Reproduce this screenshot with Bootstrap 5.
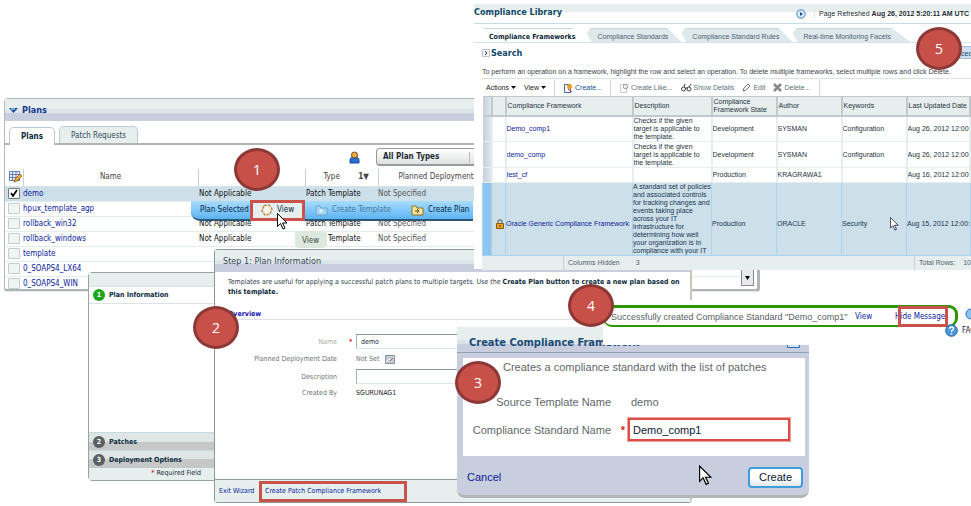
<!DOCTYPE html>
<html lang="en">
<head>
<meta charset="utf-8">
<meta name="viewport" content="width=device-width, initial-scale=1">
<title>Compliance workflow</title>
<link href="https://cdn.jsdelivr.net/npm/bootstrap@5.3.0/dist/css/bootstrap.min.css" rel="stylesheet">
<style>
:root { --navy:#0a1a9c; --pale:#e6efee; --lilac:#c8cede; --callout:#c9524b; }
body { font-family:"DejaVu Sans Condensed","Open Sans",sans-serif; font-size:7px; line-height:8px; color:#1c2b33; background:#fff; overflow:hidden; }
a { color:var(--navy); text-decoration:none; }
button, input, select { font:inherit; color:inherit; border:0; padding:0; background:none; }
.stage { min-height:100vh; overflow:hidden; }
.win { position:absolute; background:#fff; }
.t8 { font-size:8px; line-height:10px; }
.t9 { font-size:9px; line-height:12px; }
.t11 { font:11px/14px "Liberation Sans",sans-serif; }
.bar { height:22px; background:linear-gradient(var(--pale) 0 45%, #dbe5ea 45% 65%, var(--lilac) 65%); }
svg { display:block; flex:none; }

/* numbered step markers */
.step { position:absolute; width:46px; height:43px; border:3px solid #8c3836; border-radius:50%; background:#c75049; color:#fff; font:14px/37px "Open Sans",sans-serif; text-align:center; }
.s1 { left:234px; top:148px; } .s2 { left:193px; top:306px; } .s3 { left:455px; top:361px; } .s4 { left:568px; top:284px; } .s5 { left:916px; top:27px; }

/* plans window */
.plans { left:4px; top:98px; width:756px; height:194px; border:1px solid #b4b8ba; border-bottom:3px solid #aeb4b8; border-right:3px solid #aeb4b8; border-radius:4px; }
.plans-tabs { height:24px; border-bottom:2px solid #b4b4b0; padding-left:4px; }
.ptab { height:17px; padding:4px 11px 0; border:1px solid #bccad2; border-bottom:0; border-radius:5px 5px 0 0; background:var(--pale); color:#344b58; }
.ptab.on { height:18px; background:#fff; margin-bottom:-2px; color:#0b2a3c; font-weight:bold; }
.filter { height:18px; width:110px; border:1px solid #999; border-bottom:2px solid #999; border-radius:4px; background:linear-gradient(#fff,#dde2e2); font-weight:bold; padding-left:6px; appearance:none; }
.filter-row { height:24px; padding-left:344px; }
.grid { table-layout:fixed; width:100%; border-collapse:collapse; }
.plans-grid th { height:17px; font-weight:normal; text-align:center; border-right:1px solid #c5d0d8; color:#444; padding:0; border-bottom:1px solid #d6e2e8; }
.plans-grid td { height:15px; padding:0 1px; border-bottom:1px solid #e4eced; color:#111; white-space:nowrap; }
.plans-grid td:first-child { padding:0 0 0 3px; }
.plans-grid .sel td { background:#cddfe8; }
.plans-grid td.dim { color:#555; padding-left:0; }
.plans-grid td:nth-child(2) { padding:0; }
.tick { appearance:none; display:block; width:12px; height:11px; border:1px solid #c3cdcd; background:#f0f4f3; border-radius:1px; }
.tick:checked { background:#fff url("data:image/svg+xml,%3Csvg xmlns='http://www.w3.org/2000/svg' viewBox='0 0 10 9'%3E%3Cpath d='M2 4l2 3 4-6' fill='none' stroke='%23000' stroke-width='1.7'/%3E%3C/svg%3E"); border-color:#777; }
.pop { position:absolute; left:191px; top:201px; width:282px; height:20px; background:linear-gradient(#a9dcfa,#86cbfa 45%,#5cb3f4); border-bottom:2px solid #2b5a78; border-radius:0 0 0 9px; color:#04233c; padding-left:9px; white-space:nowrap; }
.pop .hot { width:55px; height:21px; border:3px solid var(--callout); background:var(--pale); }
.pop .picked { width:50px; }
.tip { position:absolute; left:295px; top:231px; width:32px; height:17px; background:#dde9df; border-radius:4px; color:#3c4a40; padding:5px 7px; }
.cursor { position:absolute; }
.scroller { position:absolute; right:3px; bottom:3px; width:13px; height:17px; border:1px solid #889; background:#e6eaea; }

/* wizard */
.wiz-nav { left:88px; top:272px; width:127px; height:209px; border:1px solid #98a49e; border-radius:4px 0 0 4px; }
.wiz-nav .item { height:18px; padding-left:4px; font-weight:bold; color:#0b2a3c; }
.wiz-nav .grey { background:linear-gradient(#dfe7e6 0 50%,#c6c8c8 50%); border-top:1px solid #c6dae2; }
.badge-no { width:12px; height:12px; border-radius:50%; background:#5b5f62; color:#fff; text-align:center; line-height:12px; flex:none; }
.badge-no.go { background:#1fa51f; }
.wiz { left:214px; top:249px; width:478px; height:254px; border:1px solid #8f9a96; border-right:2px solid #c6c6ba; border-radius:4px; }
.wiz-intro { padding:5px 4px 0 13px; line-height:10px; color:#2c3d48; }
.wiz-intro b { color:#0b2a3c; }
.wiz-form label, .wiz-form .lab { width:122px; text-align:right; color:#6b7475; }
.wiz-form .field { flex:1; height:15px; border:1px solid #dde8e8; border-top:1px solid #8898a0; border-left-color:#a8b4ba; background:#fff; }
.wiz-foot { height:23px; border-top:1px solid #8f9a96; background:var(--pale); padding-left:4px; }
.wiz-foot a:first-child { width:38px; }
.hot-link { width:148px; height:21px; border:3px solid var(--callout); padding-left:3px; margin-left:2px; }

/* compliance library */
.lib { left:474px; top:0; right:0; height:269px; font-family:"Liberation Sans",sans-serif; }
.lib-top { height:20px; margin-top:4px; border-bottom:1px solid #c4dbe8; background:linear-gradient(var(--pale) 8px,#fff 8px); }
.lib-title { color:#104868; font-weight:bold; line-height:12px; font-family:"DejaVu Sans Condensed",sans-serif; }
.lib-name { font-size:9px; margin-top:-4px; }
.lib-tabs { height:15px; margin-top:4px; border-bottom:1px solid #d5e4e8; padding-left:6px; }
.ltab { height:14px; padding:4px 13px 0 11px; background:#dfe8ea; border-top:1px solid #c2d6e4; clip-path:polygon(4px 0,calc(100% - 14px) 0,100% 100%,5px 100%,0 5px); color:#4b5f74; }
.ltab:last-child { padding-right:20px; clip-path:polygon(4px 0,calc(100% - 20px) 0,100% 100%,5px 100%,0 5px); }
.ltab.on { background:#fff; font-weight:bold; color:#0b1f38; padding:4px 11px 0 9px; font-family:"DejaVu Sans Condensed",sans-serif; }
.lib-help { color:#39444a; padding:9px 0 2px; margin-bottom:0; white-space:nowrap; }
.tools { height:17px; margin-left:8px; color:#222; }
.tools button { white-space:nowrap; display:flex; align-items:center; gap:2px; }
.tools .off { color:#5d707c; }
.tools .sep { width:1px; height:14px; background:#c2d6e4; }
.lib-grid { margin-left:8px; width:calc(100% - 8px); color:#26323c; }
.lib-grid th { height:19px; font-weight:normal; background:var(--pale); border:1px solid #c2c9cc; border-width:1px 2px 2px 0; padding:0 0 0 1px; }
.lib-grid td { border:1px solid var(--pale); border-width:1px 2px 1px 0; padding:0; white-space:nowrap; overflow:hidden; vertical-align:middle; }
.lib-grid td.wrap { white-space:normal; }
.lib-grid .tall { height:26px; }
.lib-grid td:first-child, .lib-grid th:first-child { background:linear-gradient(90deg,#c8cede,#dfe5ec); }
.lib-grid .pick td { background:#cddfe8; border:1px solid #a9d3f2; color:#173654; padding-top:10px; }
.lib-grid .pick td.wrap { padding-top:0; }
.lib-grid .pick td:first-child { background:#8fc4f0; }
.lib-foot { margin-left:8px; height:14px; background:var(--pale); color:#55606a; }
.lib-foot > div { border-left:1px solid #c8cede; height:14px; padding-left:4px; }
.more { position:absolute; right:0; top:46px; width:24px; height:13px; overflow:hidden; background:#cfdff0; border:1px solid #a5bcd6; border-right:0; color:#104868; padding:2px 0 0 13px; }

/* message strip */
.msg { left:603px; top:300px; right:0; height:45px; }
.msg-box { width:355px; height:22px; margin-top:5px; border:3px solid #2e9600; border-width:3px 3px 2px 1px; border-radius:4px 9px 9px 9px; padding-left:7px; color:#596163; font-family:"Liberation Sans",sans-serif; }
.msg-box a { font-family:"DejaVu Sans Condensed",sans-serif; }
.hide-hot { position:absolute; left:295px; top:6px; width:50px; height:21px; border:3px solid var(--callout); }
.faq { position:absolute; left:342px; top:24px; }
.faq-top { position:absolute; right:-6px; top:8px; }

/* dialog */
.dlg { left:457px; top:327px; width:352px; height:171px; background:linear-gradient(var(--pale) 13px,#dbe5ea 13px 17px,var(--lilac) 17px); border-bottom:3px solid #b3b6b6; border-radius:0 0 8px 8px; }
.dlg-head { height:31px; padding:9px 0 0 12px; color:#1b4c75; font-size:11px; font-weight:bold; line-height:13px; background:linear-gradient(#8fa0b8,#8fa0b8) 0 25px/100% 1px no-repeat; }
.dlg-body { height:98px; margin:0 4px 0 6px; background:#fff; color:#5f6769; }
.dlg-body label, .dlg-body .lab { width:148px; text-align:right; }
.dlg-input { flex:1; min-width:0; height:25px; border:3px solid #dc4b45; margin-right:14px; padding-left:3px; color:#0b2030; outline:1px solid #f0a09a; outline-offset:-1px; }
.create { width:55px; height:21px; border:2px solid #3f9ddd; border-radius:4px; background:linear-gradient(#fff 50%,#dfe8ea); color:#0b2030; line-height:15px; }
</style>
<script src="https://cdn.jsdelivr.net/npm/bootstrap@5.3.0/dist/js/bootstrap.bundle.min.js"></script>
</head>
<body>
<main class="stage position-relative">

<section class="win plans">
  <div class="bar d-flex align-items-center gap-1 ps-1 t9 fw-bold" style="color:#14348c">
    <svg width="9" height="7" viewBox="0 0 9 7"><path d="M0 1h9L4.500 6z" fill="#1c4f94"/><path d="M2 2h4z" stroke="#8ec6ee"/></svg>Plans
  </div>
  <nav class="plans-tabs d-flex align-items-end gap-1 t8">
    <a href="#" class="ptab on">Plans</a><a href="#" class="ptab">Patch Requests</a>
  </nav>
  <div class="filter-row d-flex align-items-center gap-3">
    <svg width="11" height="13" viewBox="0 0 11 13"><path d="M1 12V9q0-3 4.500-3T10 9v3z" fill="#2b6fd0" stroke="#164a9c"/><circle cx="5.500" cy="4" r="3" fill="#f0ad4e" stroke="#7a4a12"/></svg>
    <label class="visually-hidden" for="ptype">Plan type</label>
    <div class="position-relative"><select id="ptype" class="filter t8"><option>All Plan Types</option></select>
    <svg class="position-absolute top-0 end-0" width="27" height="19" viewBox="0 0 27 19"><path d="M10.500 4v11" stroke="#bbb"/><path d="M15 7h6l-3 5z" fill="#111"/></svg></div>
  </div>
  <table class="grid plans-grid t8">
    <colgroup><col style="width:18px"><col style="width:175px"><col style="width:107px"><col style="width:73px"><col></colgroup>
    <thead><tr>
      <th><svg class="ms-1" width="13" height="14" viewBox="0 0 13 14"><path d="M.5 1.500h10v9H.5zM.5 4.500h10M.5 7.500h10M3.500 1.500v9M7 1.500v9" fill="#eef3fb" stroke="#5c7fb4"/><path d="M5 12l1-3 5-5 2 2-5 5z" fill="#f0a830" stroke="#7a4a12" stroke-width=".7"/></svg></th>
      <th>Name</th><th></th><th>&nbsp; &nbsp; Type &nbsp; &nbsp; &nbsp; &nbsp;<b>1</b>&#9660;</th><th class="text-start text-nowrap" style="padding-left:20px">Planned Deployment</th></tr></thead>
    <tbody>
      <tr class="sel"><td><input class="tick" type="checkbox" aria-label="demo" checked></td><td><a href="#">demo</a></td><td>Not Applicable</td><td>Patch Template</td><td class="dim">Not Specified</td></tr>
      <tr><td><input class="tick" type="checkbox" aria-label="hpux_template_agp"></td><td><a href="#">hpux_template_agp</a></td><td></td><td></td><td></td></tr>
      <tr><td><input class="tick" type="checkbox" aria-label="rollback_win32"></td><td><a href="#">rollback_win32</a></td><td>Not Applicable</td><td>Patch Template</td><td class="dim">Not Specified</td></tr>
      <tr><td><input class="tick" type="checkbox" aria-label="rollback_windows"></td><td><a href="#">rollback_windows</a></td><td>Not Applicable</td><td>Patch Template</td><td class="dim">Not Specified</td></tr>
      <tr><td><input class="tick" type="checkbox" aria-label="template"></td><td><a href="#">template</a></td><td></td><td></td><td></td></tr>
      <tr><td><input class="tick" type="checkbox" aria-label="0_SOAPS4_LX64"></td><td><a href="#">0_SOAPS4_LX64</a></td><td></td><td></td><td></td></tr>
      <tr><td><input class="tick" type="checkbox" aria-label="0_SOAPS4_WIN"></td><td><a href="#">0_SOAPS4_WIN</a></td><td></td><td></td><td></td></tr>
    </tbody>
  </table>
  <button class="scroller d-flex align-items-center justify-content-center" aria-label="Scroll down"><svg width="5" height="4" viewBox="0 0 5 4"><path d="M0 0h5L2.500 4z"/></svg></button>
</section>

<div class="pop d-flex align-items-center t8">
  <span class="picked">Plan Selected</span>
  <button class="hot d-flex align-items-center justify-content-center gap-1"><svg width="12" height="12" viewBox="0 0 12 12"><path d="M3 1.500l5-.5 3 4-2 5-5 1-3-4z" fill="#f8f4ea" stroke="#b9924e" stroke-width="1.500" stroke-dasharray="3 1"/></svg>View</button>
  <button class="d-flex align-items-center gap-1" style="color:#4c7897;margin-left:10px"><svg width="13" height="12" viewBox="0 0 13 12"><path d="M1 2h4l1 2h6v7H1z" fill="#a5d5f3" stroke="#6da6cf"/><path d="M4 7h4M6 5v4" stroke="#e8f5fc"/></svg>Create Template</button>
  <button class="d-flex align-items-center gap-1" style="margin-left:20px"><svg width="13" height="12" viewBox="0 0 13 12"><path d="M1 2h4l1 2h6v7H1z" fill="#f4e39a" stroke="#8d7420"/><path d="M4 7h4l-2-2M8 7L6 9" stroke="#5a4a10" fill="none"/></svg>Create Plan</button>
</div>
<div class="tip t8">View</div>

<aside class="win wiz-nav d-flex flex-column">
  <div style="height:13px;background:#e6efee"></div>
  <div class="item d-flex align-items-center gap-1 border-top border-bottom"><span class="badge-no go">1</span>Plan Information</div>
  <div class="flex-grow-1"></div>
  <div class="item grey d-flex align-items-center gap-1"><span class="badge-no">2</span>Patches</div>
  <div class="item grey d-flex align-items-center gap-1"><span class="badge-no">3</span>Deployment Options</div>
  <div class="text-end" style="background:#e6efee;height:12px;line-height:11px;padding-right:13px"><b style="color:#d33">*</b> Required Field</div>
</aside>

<section class="win wiz d-flex flex-column">
  <div class="bar d-flex align-items-center t9 ps-2" style="color:#3a4954">Step 1: Plan Information</div>
  <p class="mb-0 wiz-intro">Templates are useful for applying a successful patch plans to multiple targets. Use the <b>Create Plan button to create a new plan based on<br>this template.</b></p>
  <h2 class="fw-bold border-bottom" style="font-size:7px;line-height:9px;color:#1414b4;margin:13px 0 14px 13px">Overview</h2>
  <form class="wiz-form d-flex flex-column flex-grow-1">
    <div class="d-flex align-items-center"><label for="pn" style="color:#a3abab">Name</label><b style="color:#d22;width:18px;padding-left:12px">*</b><input id="pn" class="field ps-1" value="demo" style="margin-left:1px"></div>
    <div class="d-flex align-items-center gap-3" style="height:20px"><span class="lab">Planned Deployment Date</span><span style="color:#6b7475;padding-left:3px;width:28px">Not Set</span><svg style="margin-left:-12px" width="10" height="9" viewBox="0 0 10 9"><path d="M.5.500h9v8h-9z" fill="#c4cad4" stroke="#8792a2"/><path d="M1 7l3-3 2 1 3-3" fill="none" stroke="#fff"/><path d="M5 6l3-3" stroke="#b55"/></svg></div>
    <div class="d-flex align-items-center gap-3"><label for="pd">Description</label><input id="pd" class="field" style="margin-left:3px"></div>
    <div class="d-flex align-items-center gap-3" style="height:18px"><span class="lab">Created By</span><span style="color:#222;padding-left:3px">SGURUNAG1</span></div>
  </form>
  <div class="wiz-foot d-flex align-items-center"><a href="#">Exit Wizard</a><a href="#" class="hot-link d-flex align-items-center">Create Patch Compliance Framework</a></div>
</section>

<section class="win lib">
  <header class="lib-top d-flex align-items-center">
    <h1 class="lib-title lib-name mb-0 flex-grow-1">Compliance Library</h1>
    <svg width="10" height="10" viewBox="0 0 10 10"><circle cx="5" cy="5" r="4.200" fill="#dcedfb" stroke="#3b82c4"/><path d="M4 3l3 2-3 2z" fill="#1d4f8c"/></svg>
    <span class="border-start ms-2 ps-1" style="padding-right:2px">Page Refreshed <b>Aug 26, 2012 5:20:11 AM UTC</b></span>
  </header>
  <nav class="lib-tabs d-flex">
    <a class="ltab on" href="#">Compliance Frameworks</a><a class="ltab" href="#">Compliance Standards</a><a class="ltab" href="#">Compliance Standard Rules</a><a class="ltab" href="#">Real-time Monitoring Facets</a>
  </nav>
  <h2 class="lib-title t9 d-flex align-items-center mb-0 ms-2 pt-1"><svg width="8" height="8" viewBox="0 0 8 8"><path d="M.5.500h7v7h-7z" fill="#f4f6f8" stroke="#b9c4cc"/><path d="M3 2l2 2-2 2" fill="none" stroke="#333"/></svg><span style="padding-left:1px">Search</span></h2>
  <p class="lib-help ms-2 border-bottom">To perform an operation on a framework, highlight the row and select an operation. To delete multiple frameworks, select multiple rows and click Delete.</p>
  <div class="tools d-flex align-items-center gap-2 ps-1">
    <button>Actions <svg width="5" height="3" viewBox="0 0 5 3"><path d="M0 0h5L2.500 3z"/></svg></button>
    <button>View <svg width="5" height="3" viewBox="0 0 5 3"><path d="M0 0h5L2.500 3z"/></svg></button>
    <span class="sep"></span>
    <button style="color:#16508c"><svg width="10" height="10" viewBox="0 0 10 10"><path d="M1.500 1.500h6v8h-6z" fill="#fff" stroke="#41699c"/><circle cx="6.500" cy="3.500" r="2.500" fill="#f0a020"/><path d="M5 6l4 3" stroke="#c33"/></svg>Create...</button>
    <span class="sep"></span>
    <button class="off"><svg width="10" height="10" viewBox="0 0 10 10"><path d="M1.500 1.500h6v8h-6z" fill="#fff" stroke="#c4ccd2"/><circle cx="6.500" cy="3.500" r="2.300" fill="#eee" stroke="#999"/></svg>Create Like...</button>
    <button class="off"><svg width="11" height="8" viewBox="0 0 11 8"><path d="M3 3L4 0M8 3l2-3" stroke="#444"/><circle cx="2.500" cy="5" r="2" fill="none" stroke="#444"/><circle cx="8" cy="5" r="2" fill="none" stroke="#444"/><path d="M4 4h3" stroke="#444"/></svg>Show Details</button>
    <button class="off"><svg width="9" height="9" viewBox="0 0 9 9"><path d="M1 8l1-3 4-4 2 2-4 4z" fill="#fff" stroke="#777"/></svg>Edit</button>
    <button class="off"><svg width="9" height="9" viewBox="0 0 9 9"><path d="M1 1l7 7M8 1L1 8" stroke="#888" stroke-width="2.500"/></svg>Delete...</button>
    <span class="sep"></span>
  </div>
  <table class="grid lib-grid">
    <colgroup><col style="width:9px"><col style="width:14px"><col style="width:127px"><col style="width:79px"><col style="width:65px"><col style="width:65px"><col style="width:65px"><col></colgroup>
    <thead><tr><th></th><th></th><th>Compliance Framework</th><th>Description</th><th>Compliance Framework State</th><th>Author</th><th>Keywords</th><th class="text-nowrap">Last Updated Date</th></tr></thead>
    <tbody>
      <tr class="tall"><td></td><td></td><td><a href="#">Demo_comp1</a></td><td class="wrap">Checks if the given target is applicable to the template.</td><td>Development</td><td>SYSMAN</td><td>Configuration</td><td>Aug 26, 2012 12:00:00</td></tr>
      <tr class="tall"><td></td><td></td><td><a href="#">demo_comp</a></td><td class="wrap">Checks if the given target is applicable to the template.</td><td>Development</td><td>SYSMAN</td><td>Configuration</td><td>Aug 26, 2012 12:00:00</td></tr>
      <tr style="height:15px"><td></td><td></td><td><a href="#">test_cf</a></td><td></td><td>Production</td><td>KRAGRAWA1</td><td></td><td>Aug 16, 2012 12:00:00</td></tr>
      <tr class="pick"><td></td><td><svg class="ms-1" width="8" height="10" viewBox="0 0 8 10"><path d="M2 5V3q0-2 2-2t2 2v2" fill="none" stroke="#777" stroke-width="1.300"/><path d="M.5 4.500h7v5h-7z" fill="#f0a41c" stroke="#8a5a08"/><path d="M4 6v2" stroke="#432"/></svg></td><td><a href="#">Oracle Generic Compliance Framework</a></td><td class="wrap">A standard set of policies<br>and associated controls<br>for tracking changes and<br>events taking place<br>across your IT<br>infrastructure for<br>determining how well<br>your organization is in<br>compliance with your IT</td><td>Production</td><td>ORACLE</td><td>Security</td><td>Aug 15, 2012 12:00:00</td></tr>
    </tbody>
  </table>
  <div class="lib-foot d-flex align-items-center"><div class="d-flex align-items-center gap-3 flex-grow-1" style="margin-left:81px"><span>Columns Hidden</span><span>3</span></div><div class="d-flex align-items-center gap-2"><span>Total Rows:</span><span>10</span></div></div>
  <button class="more text-start">ced</button>
</section>

<section class="win dlg">
  <div class="dlg-head">Create Compliance Framework</div>
  <div class="dlg-body t11 d-flex flex-column">
    <div style="padding:2px 0 0 40px">Creates a compliance standard with the list of patches</div>
    <div class="d-flex" style="margin-top:21px"><span class="lab">Source Template Name</span><span style="padding-left:20px">demo</span></div>
    <div class="d-flex align-items-center mt-1 pt-1"><label for="csn">Compliance Standard Name</label><b style="color:#d22;width:16px;text-align:right;padding-right:2px">*</b><input id="csn" class="dlg-input" value="Demo_comp1"></div>
  </div>
  <div class="d-flex align-items-center justify-content-between t11" style="height:42px;padding:0 6px 0 10px"><a href="#">Cancel</a><button class="create">Create</button></div>
</section>

<section class="win msg">
  <div class="msg-box d-flex align-items-center t9"><span class="text-nowrap" style="width:244px">Successfully created Compliance Standard "Demo_comp1"</span><a class="t8" href="#" style="width:40px">View</a><a class="t8 text-nowrap" href="#">Hide Message</a></div>
  <span class="hide-hot"></span>
  <div class="faq d-flex align-items-center gap-1 t8"><svg width="13" height="13" viewBox="0 0 13 13"><circle cx="6.500" cy="6.500" r="5.800" fill="#4b97dc" stroke="#1f5ea8"/><path d="M4.500 5q0-2 2-2t2 2q0 1-2 2v1M6.500 9v1.500" fill="none" stroke="#fff" stroke-width="1.300"/></svg>FAQ</div>
  <svg class="faq-top" width="12" height="12" viewBox="0 0 12 12"><circle cx="6" cy="6" r="5" fill="#8cc4f0" stroke="#2a70b8"/></svg>
</section>

<svg class="position-absolute" style="left:787px;top:345px" width="13" height="3" viewBox="0 0 13 3"><path d="M.5 0v2.500h12V0" fill="#cfe6f8" stroke="#2a70b8"/></svg>
<svg class="cursor" style="left:277px;top:213px" width="11" height="17" viewBox="0 0 11 17"><path d="M.5.500v13l3-3 2.500 5.500 2-1-2.500-5H10z" fill="#fff" stroke="#000"/></svg>
<svg class="cursor" style="left:890px;top:217px" width="9" height="14" viewBox="0 0 11 17"><path d="M.5.500v13l3-3 2.500 5.500 2-1-2.500-5H10z" fill="#fff" stroke="#223"/></svg>
<svg class="cursor" style="left:699px;top:465px" width="13" height="21" viewBox="0 0 11 17"><path d="M.5.500v13l3-3 2.500 5.500 2-1-2.500-5H10z" fill="#fff" stroke="#000"/></svg>

<div class="step s1">1</div><div class="step s2">2</div><div class="step s3">3</div><div class="step s4">4</div><div class="step s5">5</div>
</main>
</body>
</html>
